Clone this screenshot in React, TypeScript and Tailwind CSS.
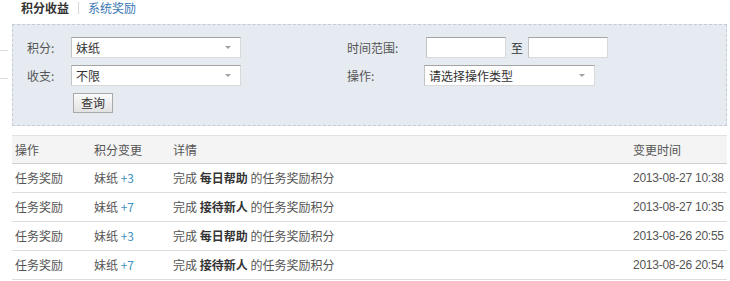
import React from "react";

const rows = [
  { op: "任务奖励", amount: "+3", task: "每日帮助", time: "2013-08-27 10:38" },
  { op: "任务奖励", amount: "+7", task: "接待新人", time: "2013-08-27 10:35" },
  { op: "任务奖励", amount: "+3", task: "每日帮助", time: "2013-08-26 20:55" },
  { op: "任务奖励", amount: "+7", task: "接待新人", time: "2013-08-26 20:54" },
];

function Select({ value, className }: { value: string; className: string }) {
  return (
    <div
      className={`flex h-[21px] items-center justify-between border border-[#d9d9d9] border-t-[#a3a3a3] border-l-[#c4c4c4] bg-white pl-[4px] pr-[9px] ${className}`}
    >
      <span className="text-[#333]">{value}</span>
      <span className="h-0 w-0 border-x-[3px] border-t-[3px] border-x-transparent border-t-[#a0a0a0]" />
    </div>
  );
}

function Input() {
  return (
    <div className="h-[21px] w-[80px] border border-[#d9d9d9] border-t-[#a3a3a3] border-l-[#c4c4c4] bg-white" />
  );
}

export default function App() {
  return (
    <div className="flex h-[281px] w-[730px] overflow-hidden bg-white font-['Noto_Sans_CJK_SC','Microsoft_YaHei',sans-serif] text-[12px] leading-[14px] text-[#333]">
      {/* fragments of the neighbouring column */}
      <div className="w-[12px] shrink-0 pt-[50px]">
        <div className="h-px w-[8px] bg-[#dcdcdc]" />
        <div className="mt-[27px] h-px w-[8px] bg-[#dcdcdc]" />
      </div>

      <div className="flex w-[715px] flex-col">
        <div className="flex h-[24px] items-start pl-[9px] leading-[16px]">
          <span className="font-bold text-[#333]">积分收益</span>
          <span className="mx-[9px] mt-[2px] h-[12px] w-px bg-[#d8d8d8]" />
          <span className="text-[#3a78b5]">系统奖励</span>
        </div>

        <div className="flex h-[102px] border border-dashed border-[#c3ccd6] bg-[#e6ebf1] pl-[14px] pt-[12px] text-[#555]">
          <div className="flex flex-col gap-[7px]">
            <div className="flex items-center">
              <span className="w-[44px]">积分:</span>
              <Select value="妹纸" className="w-[170px]" />
            </div>
            <div className="flex items-center">
              <span className="w-[44px]">收支:</span>
              <Select value="不限" className="w-[170px]" />
            </div>
            <div className="flex pl-[46px]">
              <button className="h-[20px] w-[40px] border border-[#a9a9a9] bg-gradient-to-b from-[#fbfbfb] to-[#e2e2e2] text-[12px] leading-[18px] text-[#333]">
                查询
              </button>
            </div>
          </div>

          <div className="ml-[106px] flex flex-col gap-[7px]">
            <div className="flex items-center">
              <span className="w-[79px]">时间范围:</span>
              <Input />
              <span className="mx-[5px] text-[#333]">至</span>
              <Input />
            </div>
            <div className="flex items-center">
              <span className="w-[77px]">操作:</span>
              <Select value="请选择操作类型" className="w-[171px]" />
            </div>
          </div>
        </div>

        <div className="mt-[9px] flex flex-col">
          <div className="flex h-[29px] items-center border-y border-t-[#e2e2e2] border-b-[#cfcfcf] bg-[#f4f4f4] pl-[3px] text-[#555]">
            <span className="w-[79px]">操作</span>
            <span className="w-[79px]">积分变更</span>
            <span className="flex-1">详情</span>
            <span className="w-[94px]">变更时间</span>
          </div>
          {rows.map((r, i) => (
            <div
              key={i}
              className="flex h-[29px] items-center border-b border-[#dedede] pl-[3px] text-[#555]"
            >
              <span className="w-[79px]">{r.op}</span>
              <span className="w-[79px]">
                妹纸 <span className="text-[#3f8fc0]">{r.amount}</span>
              </span>
              <span className="flex-1">
                完成 <b className="font-bold text-[#333]">{r.task}</b> 的任务奖励积分
              </span>
              <span className="w-[94px] whitespace-nowrap font-['Liberation_Sans',sans-serif] tracking-[-0.25px]">
                {r.time}
              </span>
            </div>
          ))}
        </div>
      </div>
    </div>
  );
}
